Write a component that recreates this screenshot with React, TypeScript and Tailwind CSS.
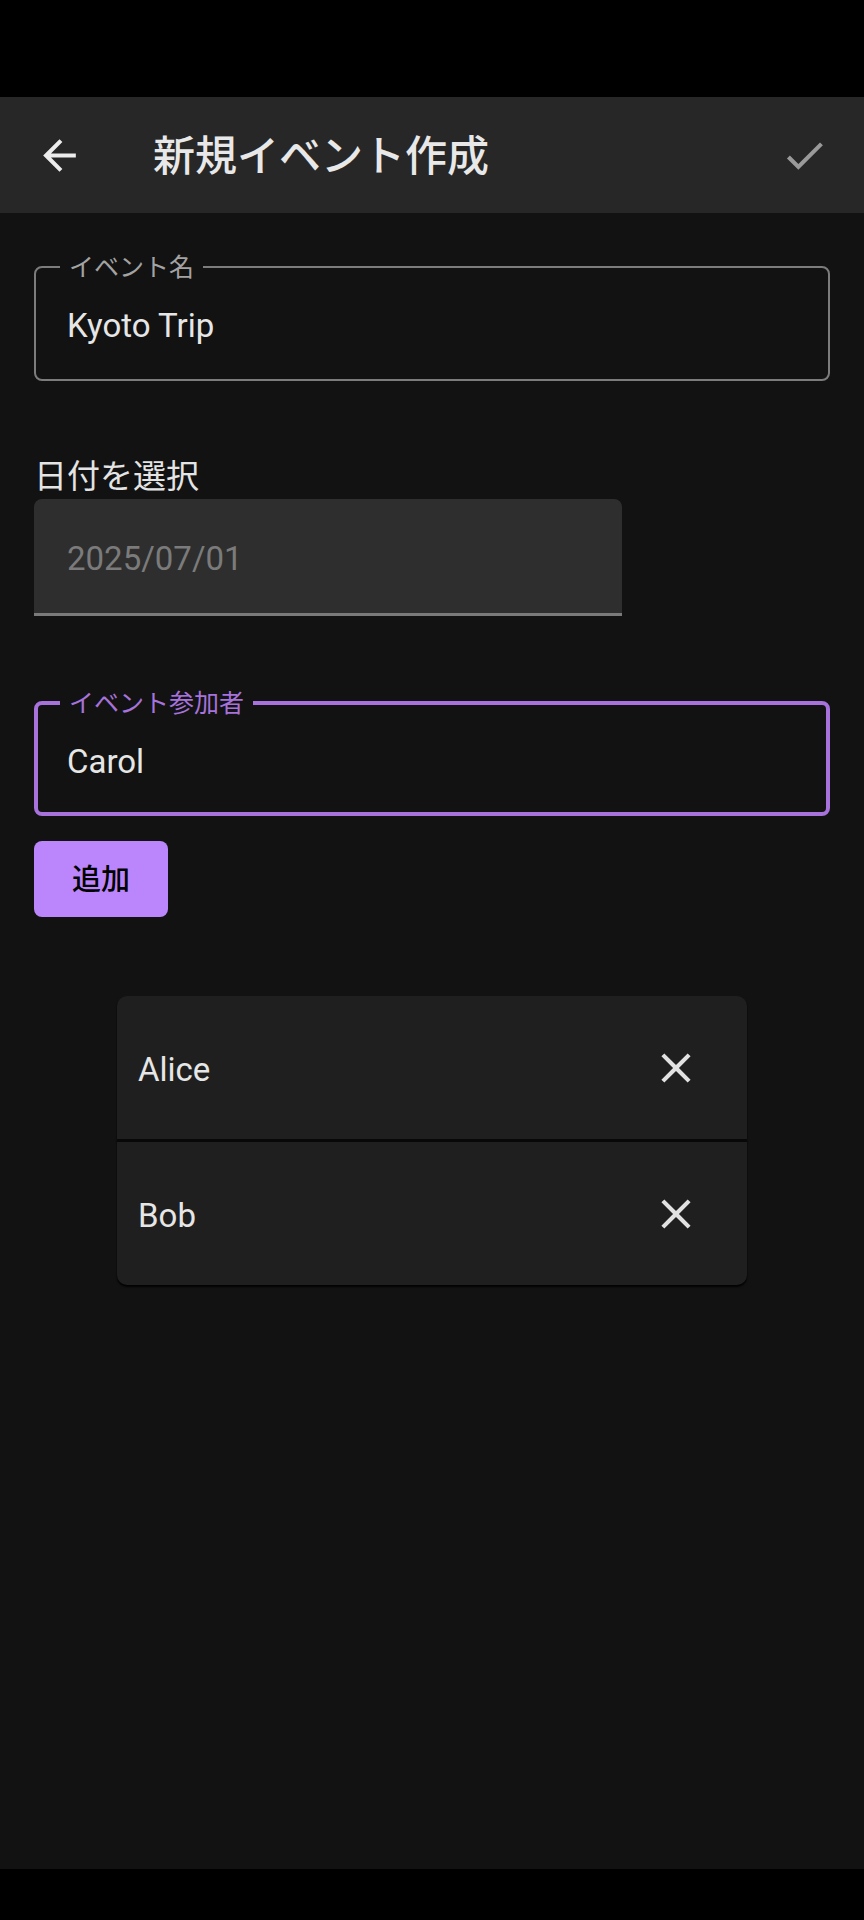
import React from "react";

const font = "font-['Roboto','Noto_Sans_CJK_JP',sans-serif]";

function ArrowBack() {
  return (
    <svg viewBox="0 0 24 24" className="w-[49px] h-[49px] fill-current text-[#ececec]">
      <path d="M20 11H7.83l5.59-5.59L12 4l-8 8 8 8 1.41-1.41L7.83 13H20v-2z" />
    </svg>
  );
}

function Check() {
  return (
    <svg viewBox="0 0 24 24" className="w-[49px] h-[49px] fill-current text-[#9a9a9a]">
      <path d="M9 16.17L4.83 12l-1.42 1.41L9 19 21 7l-1.41-1.41z" />
    </svg>
  );
}

function Close() {
  return (
    <svg viewBox="0 0 24 24" className="w-[50px] h-[50px] fill-current text-[#e2e2e2]">
      <path d="M19 6.41L17.59 5 12 10.59 6.41 5 5 6.41 10.59 12 5 17.59 6.41 19 12 13.41 17.59 19 19 17.59 13.41 12z" />
    </svg>
  );
}

const participants = ["Alice", "Bob"];

export default function App() {
  return (
    <div className={`w-full h-[1920px] bg-black flex flex-col ${font}`}>
      <div className="h-[97px] shrink-0" />

      <div className="flex-1 bg-[#121212] flex flex-col">
        {/* top app bar */}
        <div className="h-[116px] shrink-0 bg-[#272727] flex items-center px-[35px]">
          <ArrowBack />
          <h1 className="ml-[69px] translate-y-[2px] text-[42px] leading-none font-medium text-[#e8e8e8]">
            新規イベント作成
          </h1>
          <div className="ml-auto">
            <Check />
          </div>
        </div>

        <div className="px-[34px] flex flex-col">
          {/* event name */}
          <div className="relative mt-[53px] h-[115px] border-2 border-[#7c7c7c] rounded-[8px] flex items-center pl-[31px]">
            <span className="absolute left-[24px] top-0 -translate-y-1/2 -mt-[1px] px-[9px] bg-[#121212] text-[25px] leading-none text-[#a3a3a3]">
              イベント名
            </span>
            <span className="translate-y-[2px] text-[33px] text-[#e6e6e6]">Kyoto Trip</span>
          </div>

          {/* date */}
          <div className="mt-[76px] text-[33px] leading-[40px] text-[#e4e4e4]">日付を選択</div>
          <div className="mt-[2px] w-[588px] h-[117px] bg-[#2e2e2e] rounded-t-[8px] border-b-[3px] border-[#7a7a7a] flex items-center pl-[33px]">
            <span className="translate-y-[3px] text-[33px] text-[#7b7b7b]">2025/07/01</span>
          </div>

          {/* participant input (focused) */}
          <div className="relative mt-[85px] h-[115px] border-4 border-[#a772db] rounded-[8px] flex items-center pl-[29px]">
            <span className="absolute left-[22px] top-0 -translate-y-1/2 -mt-[2px] px-[9px] bg-[#121212] text-[25px] leading-none text-[#a772db]">
              イベント参加者
            </span>
            <span className="translate-y-[3px] text-[33px] text-[#e6e6e6]">Carol</span>
          </div>

          <button className="mt-[25px] w-[134px] h-[76px] bg-[#bb86fc] rounded-[8px] text-[29px] font-medium text-black flex items-center justify-center">
            <span className="translate-y-[2px]">追加</span>
          </button>

          {/* participant list */}
          <div className="mt-[79px] self-center w-[630px] bg-[#1f1f1f] rounded-[10px] overflow-hidden shadow-[0_2px_2px_rgba(0,0,0,0.9)]">
            {participants.map((name, i) => (
              <div key={name}>
                {i > 0 && <div className="h-[3px] bg-[#080808]" />}
                <div className="h-[143px] flex items-center justify-between pl-[21px] pr-[46px]">
                  <span className="translate-y-[2px] text-[33px] text-[#e6e6e6]">{name}</span>
                  <Close />
                </div>
              </div>
            ))}
          </div>
        </div>
      </div>

      <div className="h-[51px] shrink-0 bg-black" />
    </div>
  );
}
